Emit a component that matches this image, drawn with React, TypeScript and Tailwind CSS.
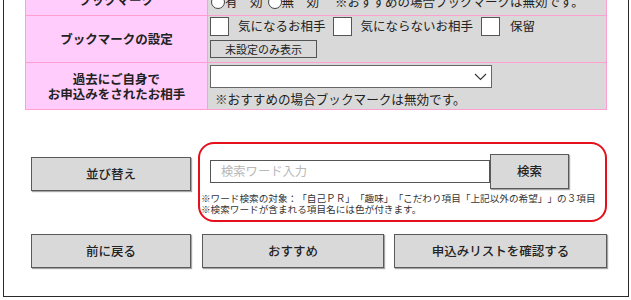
import React from "react";

const FONT = { fontFamily: '"Noto Sans CJK JP", "Noto Sans", sans-serif' };

function Checkbox() {
  return <span className="inline-block w-[19px] h-[19px] bg-white border border-[#555] shrink-0" />;
}

function Radio() {
  return <span className="inline-block w-[14px] h-[14px] rounded-full bg-white border border-[#444] shrink-0" />;
}

function Btn({ children, className }: { children: React.ReactNode; className: string }) {
  return (
    <button
      className={
        "flex items-center justify-center bg-[#d9d9d9] border border-[#5a5a5a] shadow-[1px_1px_1px_rgba(0,0,0,0.35)] text-[12.5px] font-medium text-[#222] " +
        className
      }
    >
      {children}
    </button>
  );
}

export default function App() {
  return (
    <div className="w-[631px] h-[300px] overflow-hidden bg-white text-[#222] [text-spacing-trim:space-all]" style={FONT}>
      <div className="ml-[3px] w-[626px] border-x border-b border-[#2a2a2a] pb-[28px]">
        {/* table */}
        <div className="-mt-[15px] ml-[21px] w-[582px] border border-[#ff9fd0]">
          {/* row 1 */}
          <div className="flex border-b border-[#ff9fd0]">
            <div className="w-[182px] h-[29px] shrink-0 bg-[#ffccfb] border-r border-[#ff9fd0] flex items-center justify-center text-[12.5px] font-bold leading-none">
              ブックマーク
            </div>
            <div className="flex-1 bg-[#d9d9d9] flex items-center pl-[3px] pt-[3px] text-[12.5px] leading-none">
              <Radio />
              <span>有　効</span>
              <span className="ml-[5px] flex"><Radio /></span>
              <span>無　効</span>
              <span className="ml-[16px]">※おすすめの場合ブックマークは無効です。</span>
            </div>
          </div>
          {/* row 2 */}
          <div className="flex border-b border-[#ff9fd0]">
            <div className="w-[182px] h-[46px] shrink-0 bg-[#ffccfb] border-r border-[#ff9fd0] flex items-center justify-center text-[12.5px] font-bold leading-none">
              ブックマークの設定
            </div>
            <div className="flex-1 bg-[#d9d9d9] flex flex-col items-start pl-[2px] pt-[1px] gap-[4px]">
              <div className="flex items-center text-[12.5px] leading-none">
                <Checkbox />
                <span className="ml-[9px]">気になるお相手</span>
                <span className="ml-[7px] flex"><Checkbox /></span>
                <span className="ml-[9px]">気にならないお相手</span>
                <span className="ml-[8px] flex"><Checkbox /></span>
                <span className="ml-[10px]">保留</span>
              </div>
              <button className="w-[107px] h-[18px] bg-[#d9d9d9] border border-[#555] text-[11px] leading-none flex items-center justify-center text-[#222]">
                未設定のみ表示
              </button>
            </div>
          </div>
          {/* row 3 */}
          <div className="flex">
            <div className="w-[182px] h-[46px] shrink-0 bg-[#ffccfb] border-r border-[#ff9fd0] flex flex-col items-center justify-center text-[12.5px] font-bold leading-[15px]">
              <span>過去にご自身で</span>
              <span>お申込みをされたお相手</span>
            </div>
            <div className="flex-1 bg-[#d9d9d9] flex flex-col items-start pl-[2px] pt-[2px]">
              <div className="w-[282px] h-[23px] bg-white border border-[#666] flex items-center justify-end pr-[4px]">
                <svg width="13" height="8" viewBox="0 0 13 8">
                  <polyline points="1,1 6.5,6.5 12,1" fill="none" stroke="#333" strokeWidth="1.1" />
                </svg>
              </div>
              <div className="mt-[2px] pl-[5px] text-[12.6px] leading-[17px]">※おすすめの場合ブックマークは無効です。</div>
            </div>
          </div>
        </div>

        {/* sort + search */}
        <div className="flex items-start mt-[32px] pl-[27px]">
          <Btn className="w-[160px] h-[34px] mt-[15px]">並び替え</Btn>
          <div className="ml-[7px] w-[409px] h-[80px] border-2 border-[#e5101c] rounded-[16px] pt-[10px] pl-[10px]">
            <div className="flex items-center">
              <div className="w-[280px] h-[23px] bg-white border border-[#555] flex items-center pl-[10px] text-[12.3px] text-[#b8b8b8] leading-none">
                検索ワード入力
              </div>
              <Btn className="w-[79px] h-[35px]">検索</Btn>
            </div>
            <div className="-ml-[9px] mt-[4px] text-[9.65px] leading-[11px] text-[#333] whitespace-nowrap">
              <div>※ワード検索の対象：「自己ＰＲ」「趣味」「こだわり項目「上記以外の希望」」の３項目</div>
              <div>※検索ワードが含まれる項目名には色が付きます。</div>
            </div>
          </div>
        </div>

        {/* bottom buttons */}
        <div className="flex mt-[12px] pl-[27px]">
          <Btn className="w-[160px] h-[34px]">前に戻る</Btn>
          <Btn className="w-[182px] h-[34px] ml-[11px]">おすすめ</Btn>
          <Btn className="w-[213px] h-[34px] ml-[10px]">申込みリストを確認する</Btn>
        </div>
      </div>
    </div>
  );
}
